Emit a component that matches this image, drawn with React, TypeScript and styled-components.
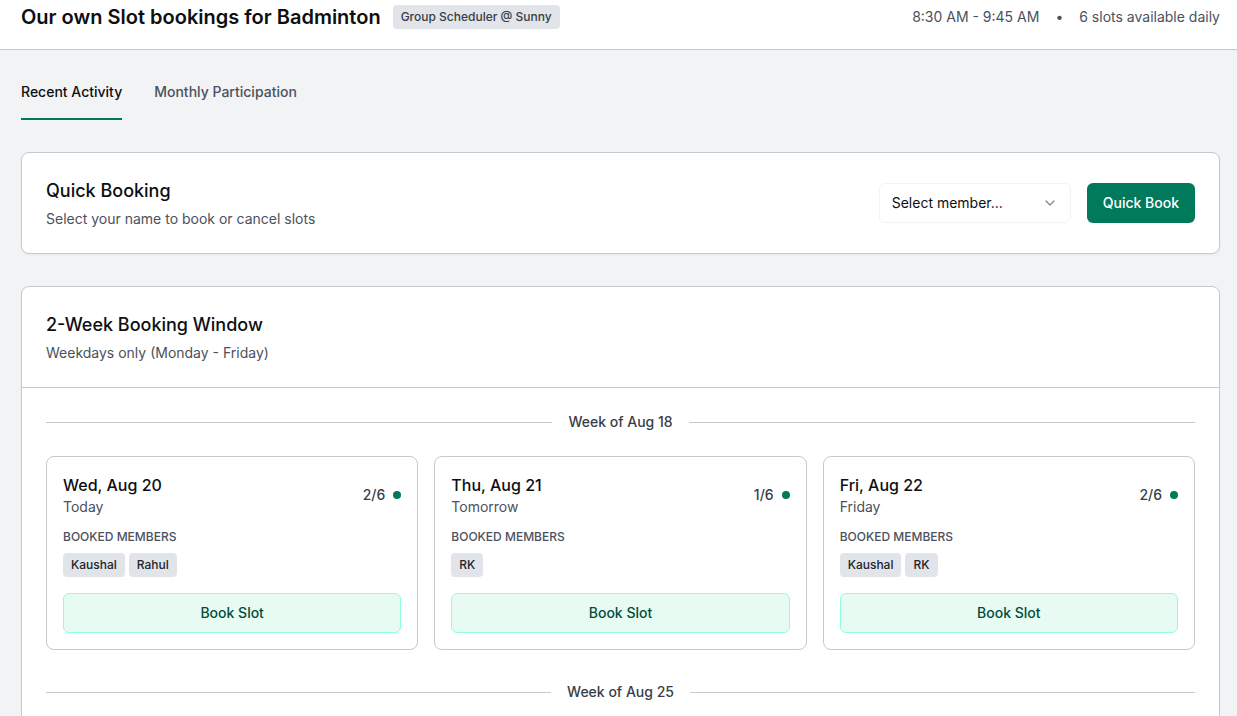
import React from "react";
import styled, { createGlobalStyle } from "styled-components";

const GlobalStyle = createGlobalStyle`
  *, *::before, *::after { box-sizing: border-box; }
  body {
    margin: 0;
    background: #f1f3f5;
    color: #0d0f12;
    font-family: Inter, "Liberation Sans", sans-serif;
    font-size: 14px;
    line-height: 20px;
  }
  h1, h2, h3, h4, p, ul { margin: 0; padding: 0; }
  button, select { font: inherit; }
`;

const Shell = styled.div`
  height: 100vh;
  overflow: hidden;
`;

const Header = styled.header`
  display: flex;
  align-items: center;
  justify-content: space-between;
  padding: 3px 17px 18px 21px;
  background: #fff;
  border-bottom: 1px solid #c5cad1;
`;

const Brand = styled.div`
  display: flex;
  align-items: center;
  gap: 12px;
`;

const Title = styled.h1`
  font-size: 20px;
  line-height: 28px;
  font-weight: 600;
`;

const Tag = styled.span<{ $strong?: boolean }>`
  display: inline-block;
  padding: 4px 8px;
  border-radius: 4px;
  background: #e1e4e9;
  color: ${(p) => (p.$strong ? "#22262c" : "#383d47")};
  font-size: 12px;
  line-height: 16px;
  font-weight: 500;
`;

const Meta = styled.div`
  display: flex;
  align-items: center;
  gap: 16px;
  color: #4b515d;
`;

const Main = styled.main`
  display: flex;
  flex-direction: column;
  gap: 32px;
  padding: 32px 17px 32px 21px;
`;

const Tabs = styled.div`
  display: flex;
  gap: 32px;
`;

const Tab = styled.button<{ $active?: boolean }>`
  padding: 0 0 16px;
  border: 0;
  border-bottom: 2px solid ${(p) => (p.$active ? "#007a5a" : "transparent")};
  background: none;
  color: ${(p) => (p.$active ? "#0d0f12" : "#4b515d")};
  font-weight: 500;
  cursor: pointer;
`;

const Panel = styled.section`
  background: #fff;
  border: 1px solid #c5cad1;
  border-radius: 8px;
  box-shadow: 0 1px 2px rgba(0, 0, 0, 0.05);
`;

const PanelHeader = styled.div<{ $divided?: boolean }>`
  display: flex;
  align-items: center;
  justify-content: space-between;
  padding: 24px;
  border-bottom: ${(p) => (p.$divided ? "1px solid #c5cad1" : "0")};
`;

const PanelTitle = styled.h2`
  font-size: 18px;
  line-height: 28px;
  font-weight: 500;
`;

const PanelText = styled.p`
  margin-top: 4px;
  color: #4b515d;
`;

const Controls = styled.div`
  display: flex;
  align-items: center;
  gap: 16px;
`;

const SelectWrap = styled.div`
  display: grid;
  align-items: center;
  width: 192px;

  & > * { grid-area: 1 / 1; }
`;

const MemberSelect = styled.select`
  appearance: none;
  width: 100%;
  height: 40px;
  padding: 0 36px 0 12px;
  border: 1px solid #f1f3f5;
  border-radius: 6px;
  background: #fff;
  color: #0d0f12;
`;

const Chevron = styled.svg`
  justify-self: end;
  width: 16px;
  height: 16px;
  margin-right: 13px;
  pointer-events: none;
`;

const PrimaryButton = styled.button`
  height: 40px;
  padding: 0 16px;
  border: 0;
  border-radius: 6px;
  background: #007a5a;
  color: #fff;
  font-weight: 500;
  cursor: pointer;
`;

const Weeks = styled.div`
  display: flex;
  flex-direction: column;
  gap: 32px;
  padding: 24px;
`;

const WeekTitle = styled.h3`
  display: flex;
  align-items: center;
  gap: 16px;
  color: #383d47;
  font-size: 14px;
  line-height: 20px;
  font-weight: 500;

  &::before, &::after {
    content: "";
    flex: 1;
    height: 1px;
    background: #c5cad1;
  }
`;

const DayGrid = styled.div`
  display: grid;
  grid-template-columns: repeat(3, 1fr);
  gap: 16px;
  margin-top: 24px;
`;

const DayCard = styled.article`
  padding: 16px;
  border: 1px solid #c5cad1;
  border-radius: 8px;
`;

const DayTop = styled.div`
  display: flex;
  align-items: center;
  justify-content: space-between;
`;

const DayName = styled.h4`
  font-size: 16px;
  line-height: 24px;
  font-weight: 500;
`;

const DayNote = styled.p`
  color: #4b515d;
`;

const Count = styled.div`
  display: flex;
  align-items: center;
  gap: 8px;
  color: #383d47;
  font-weight: 500;
`;

const Dot = styled.span`
  width: 8px;
  height: 8px;
  border-radius: 50%;
  background: #007a5a;
`;

const MembersLabel = styled.p`
  margin-top: 12px;
  color: #4b515d;
  font-size: 12px;
  line-height: 16px;
  font-weight: 500;
  text-transform: uppercase;
`;

const Members = styled.ul`
  display: flex;
  gap: 4px;
  margin: 8px 0 16px;
  list-style: none;
`;

const BookButton = styled.button`
  width: 100%;
  height: 40px;
  border: 1px solid #8fffd9;
  border-radius: 6px;
  background: #e8fbf3;
  color: #004d3a;
  font-weight: 500;
  cursor: pointer;
`;

type Day = { name: string; note: string; members: string[] };

const weeks: { title: string; days: Day[] }[] = [
  {
    title: "Week of Aug 18",
    days: [
      { name: "Wed, Aug 20", note: "Today", members: ["Kaushal", "Rahul"] },
      { name: "Thu, Aug 21", note: "Tomorrow", members: ["RK"] },
      { name: "Fri, Aug 22", note: "Friday", members: ["Kaushal", "RK"] },
    ],
  },
  { title: "Week of Aug 25", days: [] },
];

function DayItem({ day }: { day: Day }) {
  return (
    <DayCard>
      <DayTop>
        <div>
          <DayName>{day.name}</DayName>
          <DayNote>{day.note}</DayNote>
        </div>
        <Count>
          {`${day.members.length}/6`}
          <Dot />
        </Count>
      </DayTop>
      <MembersLabel>Booked Members</MembersLabel>
      <Members>
        {day.members.map((m) => (
          <Tag as="li" key={m} $strong>{m}</Tag>
        ))}
      </Members>
      <BookButton type="button">Book Slot</BookButton>
    </DayCard>
  );
}

export default function App() {
  return (
    <Shell>
      <GlobalStyle />
      <Header>
        <Brand>
          <Title>Our own Slot bookings for Badminton</Title>
          <Tag>Group Scheduler @ Sunny</Tag>
        </Brand>
        <Meta>
          <span>8:30 AM - 9:45 AM</span>
          <span>•</span>
          <span>6 slots available daily</span>
        </Meta>
      </Header>
      <Main>
        <Tabs role="tablist">
          <Tab type="button" role="tab" aria-selected="true" $active>Recent Activity</Tab>
          <Tab type="button" role="tab" aria-selected="false">Monthly Participation</Tab>
        </Tabs>
        <Panel>
          <PanelHeader>
            <div>
              <PanelTitle>Quick Booking</PanelTitle>
              <PanelText>Select your name to book or cancel slots</PanelText>
            </div>
            <Controls>
              <SelectWrap>
                <MemberSelect aria-label="Member" defaultValue="">
                  <option value="">Select member...</option>
                  <option>Kaushal</option>
                  <option>Rahul</option>
                  <option>RK</option>
                </MemberSelect>
                <Chevron viewBox="0 0 16 16" fill="none" stroke="#868686" strokeWidth="1.3" strokeLinecap="round" strokeLinejoin="round" aria-hidden="true">
                  <path d="m4 6 4 4 4-4" />
                </Chevron>
              </SelectWrap>
              <PrimaryButton type="button">Quick Book</PrimaryButton>
            </Controls>
          </PanelHeader>
        </Panel>
        <Panel>
          <PanelHeader $divided>
            <div>
              <PanelTitle>2-Week Booking Window</PanelTitle>
              <PanelText>Weekdays only (Monday - Friday)</PanelText>
            </div>
          </PanelHeader>
          <Weeks>
            {weeks.map((week) => (
              <section key={week.title}>
                <WeekTitle>{week.title}</WeekTitle>
                {week.days.length > 0 && (
                  <DayGrid>
                    {week.days.map((day) => <DayItem key={day.name} day={day} />)}
                  </DayGrid>
                )}
              </section>
            ))}
          </Weeks>
        </Panel>
      </Main>
    </Shell>
  );
}
